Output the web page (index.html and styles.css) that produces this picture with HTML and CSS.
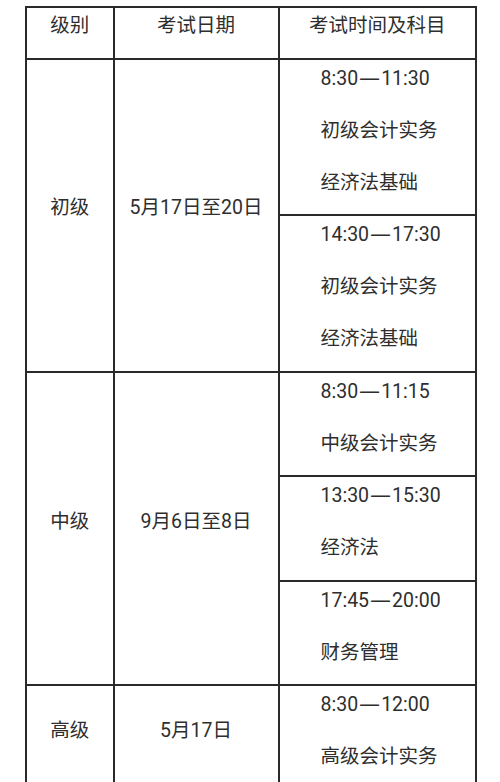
FILE: index.html
```html
<!DOCTYPE html>
<html lang="zh-CN">
<head>
<meta charset="utf-8">
<link rel="stylesheet" href="styles.css">
</head>
<body>
<table class="exam">
  <colgroup>
    <col class="c-level">
    <col class="c-date">
    <col class="c-time">
  </colgroup>
  <tr class="head">
    <td class="mid"><p>级别</p></td>
    <td class="mid"><p>考试日期</p></td>
    <td class="mid"><p>考试时间及科目</p></td>
  </tr>
  <tr>
    <td class="mid" rowspan="2"><p>初级</p></td>
    <td class="mid" rowspan="2"><p>5月17日至20日</p></td>
    <td class="sub"><p>8:30<span class="dash">—</span>11:30</p><p>初级会计实务</p><p>经济法基础</p></td>
  </tr>
  <tr>
    <td class="sub"><p>14:30<span class="dash">—</span>17:30</p><p>初级会计实务</p><p>经济法基础</p></td>
  </tr>
  <tr>
    <td class="mid" rowspan="3"><p>中级</p></td>
    <td class="mid" rowspan="3"><p>9月6日至8日</p></td>
    <td class="sub"><p>8:30<span class="dash">—</span>11:15</p><p>中级会计实务</p></td>
  </tr>
  <tr>
    <td class="sub"><p>13:30<span class="dash">—</span>15:30</p><p>经济法</p></td>
  </tr>
  <tr>
    <td class="sub"><p>17:45<span class="dash">—</span>20:00</p><p>财务管理</p></td>
  </tr>
  <tr>
    <td class="mid"><p>高级</p></td>
    <td class="mid"><p>5月17日</p></td>
    <td class="sub"><p>8:30<span class="dash">—</span>12:00</p><p>高级会计实务</p></td>
  </tr>
</table>
</body>
</html>
```
FILE: styles.css
```css
html, body {
  margin: 0;
  padding: 0;
  background: #ffffff;
}
body {
  padding: 6px 0 0 25px;
  font-family: Roboto, "Noto Sans CJK SC", sans-serif;
  font-size: 19.5px;
  color: #2e2e2e;
}
.exam {
  border-collapse: collapse;
  table-layout: fixed;
  width: 450px;
}
.c-level { width: 87.5px; }
.c-date { width: 165px; }
.c-time { width: 197.5px; }
.exam td {
  border: 2px solid #2a2a2a;
  padding: 0;
  vertical-align: middle;
}
.exam p {
  margin: 0 0 17px;
  line-height: 35px;
  white-space: nowrap;
}
.exam td p:last-child {
  margin-bottom: 14.5px;
}
.exam td.mid {
  text-align: center;
}
.exam td.sub {
  text-align: left;
  padding-left: 41px;
  vertical-align: top;
}
.dash {
  font-family: "DejaVu Sans", sans-serif;
  font-size: 1.08em;
  margin: 0 1px;
}
```
